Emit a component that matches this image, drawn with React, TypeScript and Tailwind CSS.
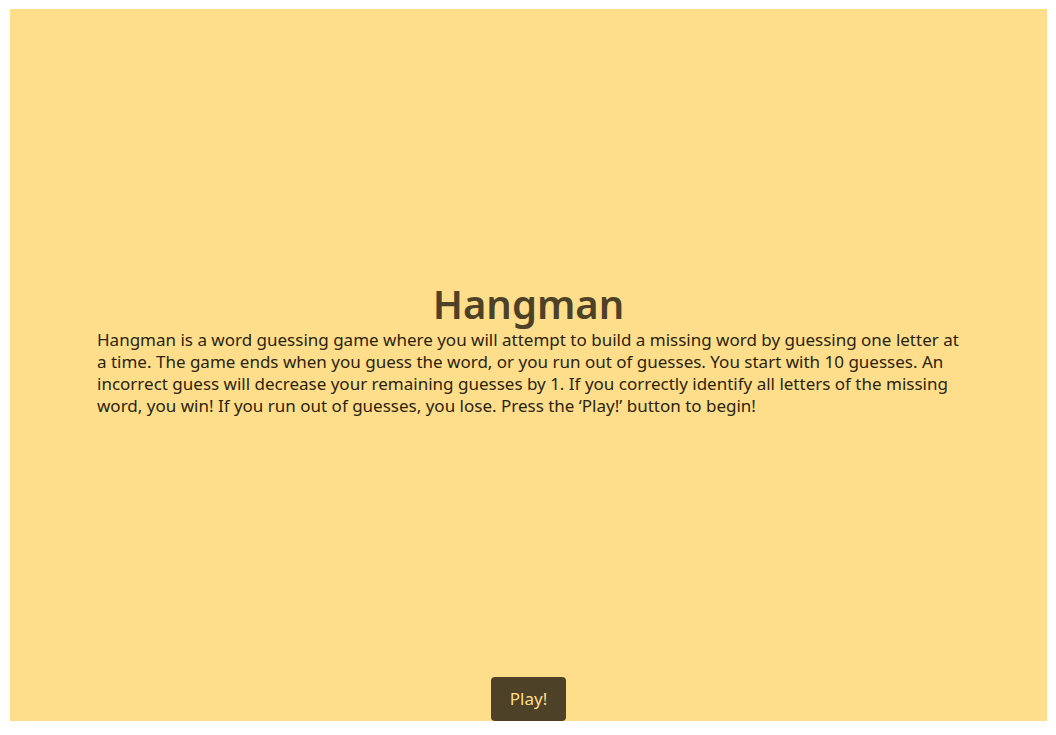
export default function App() {
  return (
    <div className="bg-white w-[1056px] h-[735px] pt-[9px] pl-[10px]" style={{ fontFamily: '"Noto Sans", "Open Sans", sans-serif' }}>
      <div className="w-[1037px] h-[712px] bg-[#fede8a] flex flex-col items-center">
        <div className="flex-1 flex flex-col justify-center items-center px-[87px] pt-[10px]">
          <h1 className="text-[40px] leading-[50px] font-semibold text-[#4d4127]">Hangman</h1>
          <p className="text-[17px] leading-[22px] text-[#2b2410]">
            Hangman is a word guessing game where you will attempt to build a missing word by guessing one letter at a time. The game ends when you guess the word, or you run out of guesses. You start with 10 guesses. An incorrect guess will decrease your remaining guesses by 1. If you correctly identify all letters of the missing word, you win! If you run out of guesses, you lose. Press the ‘Play!’ button to begin!
          </p>
        </div>
        <button className="w-[75px] h-[44px] rounded bg-[#4d4127] text-[#fede8a] text-[17px]">Play!</button>
      </div>
    </div>
  )
}
